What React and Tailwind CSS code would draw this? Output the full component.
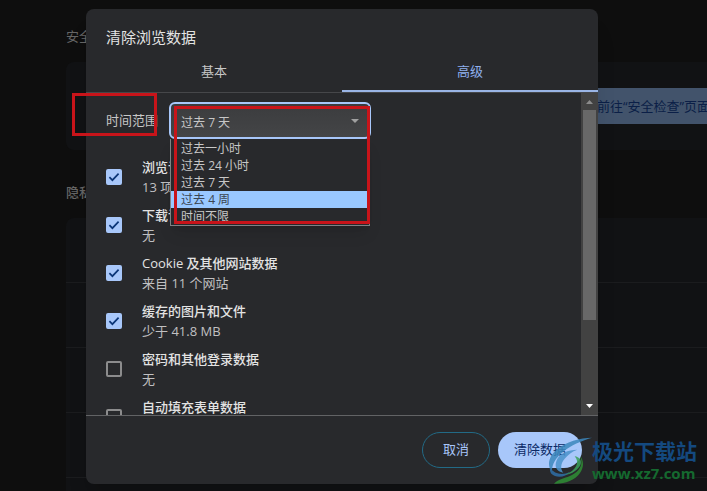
import React, { useState } from 'react';

const ranges = ['过去一小时', '过去 24 小时', '过去 7 天', '过去 4 周', '时间不限'];

const items = [
  { id: 'history', title: '浏览记录', detail: '13 项内容', checked: true },
  { id: 'downloads', title: '下载记录', detail: '无', checked: true },
  { id: 'cookies', title: 'Cookie 及其他网站数据', detail: '来自 11 个网站', checked: true },
  { id: 'cache', title: '缓存的图片和文件', detail: '少于 41.8 MB', checked: true },
  { id: 'passwords', title: '密码和其他登录数据', detail: '无', checked: false },
  { id: 'autofill', title: '自动填充表单数据', detail: '', checked: false },
];

function SettingsPage() {
  return (
    <div className="w-[746px] pl-[66px] pt-[26px] text-[13px] leading-5 text-[#666666]">
      <h2>安全检查</h2>
      <div className="mt-4 flex h-[88px] items-center justify-end rounded-lg bg-[#111214] px-5">
        <button type="button" className="h-9 bg-[#42536b] px-4 text-[#0b1f47]">
          前往“安全检查”页面
        </button>
      </div>
      <h2 className="mt-8 font-medium">隐私和安全</h2>
      <div className="mt-4 divide-y divide-[#1b1c1e] rounded-t-lg bg-[#111214]">
        <div className="h-[65px]" />
        <div className="h-[65px]" />
        <div className="h-[65px]" />
        <div className="h-[65px]" />
        <div className="h-[65px]" />
      </div>
    </div>
  );
}

function DataItem({ item }) {
  const [checked, setChecked] = useState(item.checked);

  return (
    <div className="flex h-12 shrink-0 items-center gap-5">
      <span className="relative h-4 w-4">
        <input
          id={item.id}
          type="checkbox"
          checked={checked}
          onChange={(e) => setChecked(e.target.checked)}
          className="block h-4 w-4 appearance-none rounded-xs border-2 border-[#8c8c8d] checked:border-[#a8c7fa] checked:bg-[#a8c7fa]"
        />
        {checked && (
          <svg viewBox="0 0 16 16" className="pointer-events-none absolute inset-0 h-4 w-4" fill="none" stroke="#0b3577" strokeWidth="1.7">
            <path d="M3.400 8.200l3 3 6.200-6.500" />
          </svg>
        )}
      </span>
      <label htmlFor={item.id} className="h-10 leading-5">
        <span className="block font-medium text-[#e3e3e3]">{item.title}</span>
        <span className="block text-[#c0c0c2]">{item.detail}</span>
      </label>
    </div>
  );
}

function TimeRange() {
  const [value, setValue] = useState('过去 7 天');

  return (
    <div className="flex items-center gap-[11px]">
      <label htmlFor="range" className="text-[#c7c7c7]">时间范围</label>
      <div className="relative w-[202px]">
        <select
          id="range"
          value={value}
          onChange={(e) => setValue(e.target.value)}
          className="block h-[37px] w-full appearance-none rounded-md border-2 border-[#a8c7fa] bg-linear-to-b from-[#3b3c3e] to-[#444547] pl-2.5 pt-1 text-xs text-[#c7c7c7]"
        >
          {ranges.map((range) => (
            <option key={range}>{range}</option>
          ))}
        </select>
        <svg viewBox="0 0 8 4" className="pointer-events-none absolute right-3 top-[17px] h-1 w-2" fill="#a0a0a0">
          <path d="M0 0h8L4 4z" />
        </svg>
        {/* Open list */}
        <ul role="listbox" className="absolute inset-x-px top-full z-10 border border-[#808184] border-t-0 bg-[#28292c] pt-px text-xs shadow-lg">
          {ranges.map((range) => (
            <li
              key={range}
              role="option"
              aria-selected={range === '过去 4 周'}
              className="h-[17px] pl-2.5 leading-[17px] text-[#c7c7c7] aria-selected:bg-[#99c8ff] aria-selected:text-[#3b4552]"
            >
              {range}
            </li>
          ))}
        </ul>
        <div className="pointer-events-none absolute left-[5px] top-1 z-20 h-[118px] w-[196px] border-3 border-[#c8141a]" />
      </div>
    </div>
  );
}

function Scrollbar() {
  return (
    <div className="flex w-[17px] shrink-0 flex-col items-center bg-[#424242]">
      <svg viewBox="0 0 17 17" className="h-[17px] w-[17px] shrink-0" fill="#8b8b8b">
        <path d="M5 11h7L8.500 7z" />
      </svg>
      <div className="min-h-0 w-full flex-1 px-0.5">
        <div className="h-[73%] bg-[#686868]" />
      </div>
      <svg viewBox="0 0 17 17" className="h-[17px] w-[17px] shrink-0" fill="#ffffff">
        <path d="M5 6h7L8.500 10z" />
      </svg>
    </div>
  );
}

function ClearDataDialog() {
  return (
    <div role="dialog" aria-labelledby="dialog-title" className="flex h-full w-lg flex-col rounded-lg bg-[#28292c] text-[13px] shadow-xl">
      <h1 id="dialog-title" className="px-5 pt-4 text-[15px] leading-6 text-[#e3e3e3]">清除浏览数据</h1>
      <div role="tablist" className="mt-1 flex h-10 shrink-0 border-b border-[#46474a]">
        <button type="button" role="tab" aria-selected="false" className="flex-1 border-b-2 border-transparent text-[#c7c7c7]">
          基本
        </button>
        <button type="button" role="tab" aria-selected="true" className="flex-1 border-b-2 border-[#9ab5e6] text-[#8fb0ee]">
          高级
        </button>
      </div>

      <div className="flex min-h-0 flex-1">
        <div className="flex flex-1 flex-col overflow-hidden px-5 pt-[9px]">
          <TimeRange />
          <div className="mt-[14px]">
            {items.map((item) => (
              <DataItem key={item.id} item={item} />
            ))}
          </div>
        </div>
        <Scrollbar />
      </div>

      <div className="flex shrink-0 justify-end gap-2 border-t border-[#626365] p-4">
        <button type="button" className="h-9 rounded-full border border-[#226a86] px-5 text-[#a8c7fa]">
          取消
        </button>
        <button type="button" className="h-9 rounded-full bg-[#a8c7fa] px-4 text-[#0b2a66]">
          清除数据
        </button>
      </div>
    </div>
  );
}

function Watermark() {
  return (
    <div className="pointer-events-none absolute bottom-1 right-2.5 flex items-center">
      <svg viewBox="0 0 168 150" className="-mr-2 h-[50px] w-14">
        <g opacity="0.85">
          <path d="M144 2C108 2 66 14 38 38 14 58 8 84 24 108 22 84 34 62 58 44 82 24 110 12 144 2z" fill="#3c88bd" />
          <path d="M100 38C72 38 46 50 38 70c-8 20 0 34 20 37-10-12-8-28 4-42 10-12 22-22 38-27z" fill="#4b93cc" />
          <path d="M18 92c14 20 38 24 60 12-14 18-42 20-56 6-4-6-5-12-4-18z" fill="#2f6fa8" />
          <path d="M92 58c16 18 6 42-30 56 22-2 42-16 48-32 4-12-4-22-18-24z" fill="#3aa05a" />
          <path d="M108 58c12 24-2 48-32 60-14 6-32 8-46 22 28 2 62-8 78-32 12-18 12-38 0-50z" fill="#2f8f35" />
        </g>
      </svg>
      <div className="pb-0.5">
        <p className="text-[21px] font-bold leading-6 text-[#14497f]">极光下载站</p>
        <p className="font-['Open_Sans',sans-serif] text-[15px] font-bold leading-5 text-[#15692f]">www.xz7.com</p>
      </div>
    </div>
  );
}

export default function App() {
  return (
    <div className="relative h-screen overflow-hidden bg-[#0e0e0e] font-['Open_Sans','Noto_Sans_CJK_SC',sans-serif]">
      <SettingsPage />
      <div className="absolute inset-0 flex justify-center pb-[7px] pr-[23px] pt-[9px]">
        <ClearDataDialog />
      </div>
      {/* Callout around the time range label */}
      <div className="pointer-events-none absolute left-[72px] top-[93px] h-[43px] w-[85px] border-3 border-[#c8141a]" />
      <Watermark />
    </div>
  );
}
